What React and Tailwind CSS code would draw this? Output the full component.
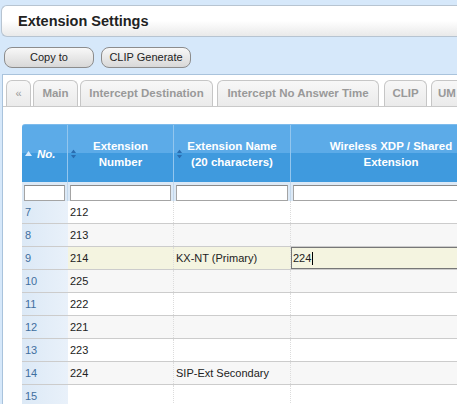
const TABS = [
  { label: "«", w: "w-[25px]", ml: "ml-[3px]", plain: true },
  { label: "Main", w: "w-[45px]", ml: "ml-[2px]" },
  { label: "Intercept Destination", w: "w-[133px]", ml: "ml-[2px]" },
  { label: "Intercept No Answer Time", w: "w-[162px]", ml: "ml-[4px]" },
  { label: "CLIP", w: "w-[43px]", ml: "ml-[5px]" },
  { label: "UM", w: "w-[60px]", ml: "ml-[4px]", left: true },
];

const ROWS = [
  { no: 7, ext: "212", name: "" },
  { no: 8, ext: "213", name: "" },
  { no: 9, ext: "214", name: "KX-NT (Primary)", editing: "224" },
  { no: 10, ext: "225", name: "" },
  { no: 11, ext: "222", name: "" },
  { no: 12, ext: "221", name: "" },
  { no: 13, ext: "223", name: "" },
  { no: 14, ext: "224", name: "SIP-Ext Secondary" },
  { no: 15, ext: "", name: "" },
];

const COLS = "grid grid-cols-[46px_106px_117px_200px]";

function SortIcon() {
  return (
    <svg width="5" height="9" viewBox="0 0 5 9" className="absolute left-[3px] top-1/2 -translate-y-1/2">
      <path d="M2.5 0 L5 3.5 L0 3.5 Z" fill="#2a6db0" />
      <path d="M2.5 9 L5 5.5 L0 5.5 Z" fill="#2a6db0" />
    </svg>
  );
}

export default function App() {
  return (
    <div className="w-[457px] h-[404px] overflow-hidden bg-[#d6e8fa] flex flex-col font-['Liberation_Sans',Arial,sans-serif] text-[#222]">
      <div className="mt-[5px] ml-[1px] w-[470px] h-[32px] shrink-0 rounded-l-[6px] border border-r-0 border-[#b7c4d1] bg-gradient-to-b from-white via-white to-[#e9e9e9] flex items-center pl-[16px] pt-[1px]">
        <span className="text-[14.5px] font-bold">Extension Settings</span>
      </div>

      <div className="mt-[10px] ml-[4px] flex gap-[7px] shrink-0">
        <button className="w-[90px] h-[21px] rounded-[8px] border border-[#8c8c8c] bg-gradient-to-b from-[#f8f8f8] to-[#d8d8d8] text-[11px] leading-none">
          Copy to
        </button>
        <button className="w-[90px] h-[21px] rounded-[8px] border border-[#8c8c8c] bg-gradient-to-b from-[#f8f8f8] to-[#d8d8d8] text-[11px] leading-none">
          CLIP Generate
        </button>
      </div>

      <div className="mt-[6px] ml-[2px] w-[480px] flex-1 border-l border-t border-[#a9c3dc] bg-white flex flex-col">
        <div className="flex pt-[5px] border-b border-[#c9c9c9] shrink-0">
          {TABS.map((t) => (
            <div
              key={t.label}
              className={`${t.w} ${t.ml} h-[26px] shrink-0 rounded-t-[6px] border border-b-0 border-[#c6c6c6] bg-gradient-to-b from-[#f7f7f7] to-[#ebebeb] flex items-center text-[#999] ${t.left ? "justify-start pl-[6px]" : "justify-center"} ${t.plain ? "text-[11px]" : "text-[11.5px] font-bold"}`}
            >
              {t.label}
            </div>
          ))}
        </div>

        <div className="pl-[19px] pt-[17px]">
          <div className={`${COLS} h-[58px] rounded-tl-[3px] bg-gradient-to-b from-[#5cabe8] from-50% to-[#3f9ade] to-50% border-t border-[#7dbbec] text-white font-bold text-[11.5px] leading-[16px]`}>
            <div className="flex items-center pl-[3px] border-r border-[#93c6ee]">
              <svg width="7" height="5" viewBox="0 0 7 5">
                <path d="M3.5 0 L7 5 L0 5 Z" fill="#d8ecff" />
              </svg>
              <span className="ml-[5px] italic">No.</span>
            </div>
            <div className="relative flex items-center justify-center text-center border-r border-[#93c6ee]">
              <SortIcon />
              <span>Extension<br />Number</span>
            </div>
            <div className="relative flex items-center justify-center text-center border-r border-[#93c6ee]">
              <SortIcon />
              <span>Extension Name<br />(20 characters)</span>
            </div>
            <div className="flex items-center justify-center text-center">
              <span>Wireless XDP / Shared<br />Extension</span>
            </div>
          </div>

          <div className={`${COLS} h-[19px] bg-[#dce9f6]`}>
            {[0, 1, 2, 3].map((i) => (
              <div key={i} className="px-[2px] pt-[3px] border-r border-[#c3d8ec]">
                <div className="h-[16px] bg-white border border-[#a4a4a4] border-t-[#8a8a8a]" />
              </div>
            ))}
          </div>

          {ROWS.map((r) => {
            const bg = r.editing ? "bg-[#f4f4e0]" : r.no % 2 === 0 ? "bg-[#f7f7f7]" : "bg-white";
            return (
              <div key={r.no} className={`${COLS} h-[23px] text-[11px] border-b border-[#cccccc]`}>
                <div className="flex items-center pl-[3px] bg-gradient-to-r from-[#dce9f6] to-[#e9f1fa] text-[#3f6f9f]">
                  {r.no}
                </div>
                <div className={`flex items-center pl-[2px] ${bg} border-r border-dotted border-[#dcdcdc]`}>
                  {r.ext}
                </div>
                <div className={`flex items-center pl-[2px] ${bg} border-r border-dotted border-[#dcdcdc]`}>
                  {r.name}
                </div>
                <div className={`flex items-center ${bg}`}>
                  {r.editing && (
                    <div className="w-full h-full border border-[#777] flex items-center pl-[1px] bg-[#f4f4e0]">
                      {r.editing}
                      <span className="ml-[1px] w-px h-[13px] bg-black" />
                    </div>
                  )}
                </div>
              </div>
            );
          })}
        </div>
      </div>
    </div>
  );
}
